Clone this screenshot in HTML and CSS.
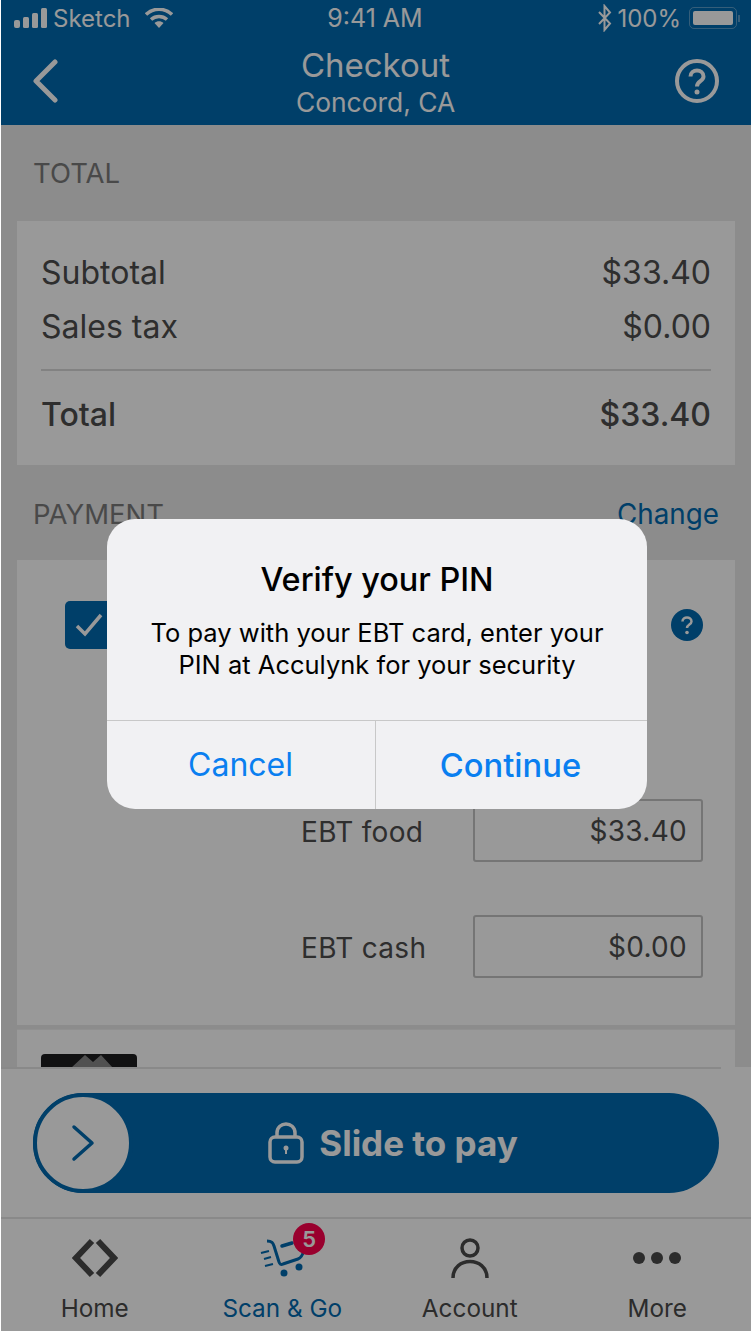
FILE: index.html
```html
<!DOCTYPE html>
<html>
  <head>
    <meta charset="utf-8">
    <title>Checkout</title>
    <link rel="stylesheet" href="styles.css">
  </head>
  <body>
    <div class="phone">
      <header class="top">
        <div class="status">
          <div class="status-left">
            <svg class="signal" width="33" height="20" viewBox="0 0 33 20"><rect x="0" y="12" width="6" height="8" rx="2"/><rect x="9" y="9" width="6" height="11" rx="1.5"/><rect x="18" y="5" width="6" height="15" rx="1.5"/><rect x="27" y="0" width="6" height="20" rx="1.5"/></svg>
            <span>Sketch</span>
            <svg class="wifi" width="28" height="20" viewBox="0 0 28 20"><path d="M1 6.500C8.500 -0.500 19.500 -0.500 27 6.500" fill="none" stroke="#fff" stroke-width="3.500"/><path d="M6 11.500C10.500 7.500 17.500 7.500 22 11.500" fill="none" stroke="#fff" stroke-width="3.500"/><path d="M9.500 15L14 20L18.500 15C16 12.800 12 12.800 9.500 15Z" fill="#fff"/></svg>
          </div>
          <div class="status-time">9:41 AM</div>
          <div class="status-right">
            <svg width="15" height="28" viewBox="0 0 15 28"><path d="M2 8L13 19.500L7.500 26V2L13 8.500L2 20" fill="none" stroke="#fff" stroke-width="2"/></svg>
            <span>100%</span>
            <span class="battery"><i></i></span>
            <span class="battery-tip"></span>
          </div>
        </div>
        <div class="nav">
          <svg class="back" width="26" height="44" viewBox="0 0 26 44"><path d="M23 3L4 22L23 41" fill="none" stroke="#fff" stroke-width="5" stroke-linecap="round" stroke-linejoin="round"/></svg>
          <div class="nav-title">
            <div class="nav-main">Checkout</div>
            <div class="nav-sub">Concord, CA</div>
          </div>
          <svg class="help" width="44" height="44" viewBox="0 0 44 44"><circle cx="22" cy="22" r="20" fill="none" stroke="#fff" stroke-width="4"/><path d="M15.500 17.500C15.500 9.500 28.500 9.500 28.500 17.500C28.500 22.500 22 22 22 27.500" fill="none" stroke="#fff" stroke-width="4"/><circle cx="22" cy="33" r="2.500" fill="#fff"/></svg>
        </div>
      </header>

      <main class="content">
        <div class="section-head">
          <span>TOTAL</span>
        </div>
        <section class="card totals">
          <div class="row"><span>Subtotal</span><span>$33.40</span></div>
          <div class="row"><span>Sales tax</span><span>$0.00</span></div>
          <div class="rule"></div>
          <div class="row row-total"><span>Total</span><span>$33.40</span></div>
        </section>

        <div class="section-head section-payment">
          <span>PAYMENT</span>
          <a class="change">Change</a>
        </div>
        <section class="card payment">
          <div class="pay-top">
            <span class="checkbox">
              <svg width="30" height="26" viewBox="0 0 30 26"><path d="M3 14L11 22L27 3" fill="none" stroke="#fff" stroke-width="3.500"/></svg>
            </span>
            <svg class="info" width="32" height="32" viewBox="0 0 32 32"><circle cx="16" cy="16" r="16" fill="#0069af"/><path d="M11.500 12.500C11.500 7 20.500 7 20.500 12.500C20.500 15.500 16 15.500 16 19" fill="none" stroke="#fff" stroke-width="2.500"/><circle cx="16" cy="23.500" r="1.800" fill="#fff"/></svg>
          </div>
          <div class="ebt-row ebt-food">
            <span class="ebt-label">EBT food</span>
            <span class="ebt-input">$33.40</span>
          </div>
          <div class="ebt-row ebt-cash">
            <span class="ebt-label">EBT cash</span>
            <span class="ebt-input">$0.00</span>
          </div>
        </section>
        <section class="card other-card">
          <div class="card-logo">
            <svg width="96" height="14" viewBox="0 0 96 14"><path d="M30 14L44 1L52 8L60 1L72 14Z" fill="#888"/></svg>
          </div>
        </section>
      </main>

      <footer class="bottom">
        <div class="bottom-rule"></div>
        <div class="slider">
          <div class="slider-knob">
            <svg width="24" height="38" viewBox="0 0 24 38"><path d="M3 3L21 19L3 35" fill="none" stroke="#0069af" stroke-width="3.500" stroke-linecap="round" stroke-linejoin="round"/></svg>
          </div>
          <div class="slider-label">
            <svg width="36" height="42" viewBox="0 0 36 42"><rect x="2" y="15" width="32" height="25" rx="5" fill="none" stroke="#fff" stroke-width="3.500"/><path d="M9 15V11C9 -1 27 -1 27 11V15" fill="none" stroke="#fff" stroke-width="3.500"/><circle cx="18" cy="26" r="2.500" fill="#fff"/><rect x="17" y="27" width="2" height="5" fill="#fff"/></svg>
            <span>Slide to pay</span>
          </div>
        </div>
        <nav class="tabs">
          <div class="tab">
            <svg width="46" height="40" viewBox="0 0 46 40"><path d="M20 3L4 20L20 37" fill="none" stroke="#4a4a4a" stroke-width="6"/><path d="M26 3L42 20L26 37" fill="none" stroke="#4a4a4a" stroke-width="6"/></svg>
            <span>Home</span>
          </div>
          <div class="tab tab-active">
            <span class="tab-icon">
              <svg width="48" height="42" viewBox="0 0 48 42"><path d="M9 3C14 3 15 5 16 8L21 24C21.500 26 23 27 25 26L40 21C43 20 45 16 46 12" fill="none" stroke="#0069af" stroke-width="3"/><path d="M24 8L34 5" fill="none" stroke="#0069af" stroke-width="3.500" stroke-linecap="round"/><path d="M3 15L11 13M6 21L13 19M7 28L15 26" fill="none" stroke="#0069af" stroke-width="2"/><circle cx="26" cy="35" r="3.500" fill="#0069af"/><circle cx="41" cy="29" r="3.500" fill="#0069af"/></svg>
              <b class="badge">5</b>
            </span>
            <span>Scan &amp; Go</span>
          </div>
          <div class="tab">
            <svg width="40" height="40" viewBox="0 0 40 40"><circle cx="20" cy="10" r="8" fill="none" stroke="#4a4a4a" stroke-width="3.500"/><path d="M3 40C3 18 37 18 37 40" fill="none" stroke="#4a4a4a" stroke-width="3.500"/></svg>
            <span>Account</span>
          </div>
          <div class="tab">
            <svg width="48" height="40" viewBox="0 0 48 40"><circle cx="6" cy="20" r="6" fill="#4a4a4a"/><circle cx="24" cy="20" r="6" fill="#4a4a4a"/><circle cx="42" cy="20" r="6" fill="#4a4a4a"/></svg>
            <span>More</span>
          </div>
        </nav>
      </footer>

      <div class="scrim">
        <div class="alert">
          <div class="alert-body">
            <div class="alert-title">Verify your PIN</div>
            <div class="alert-text">To pay with your EBT card, enter your<br>PIN at Acculynk for your security</div>
          </div>
          <div class="alert-actions">
            <div class="alert-btn">Cancel</div>
            <div class="alert-btn alert-btn-strong">Continue</div>
          </div>
        </div>
      </div>
    </div>
  </body>
</html>
```

FILE: styles.css
```css
html, body {
  margin: 0;
  background: #fff;
}

body {
  padding-left: 1px;
  font-family: Inter, "Liberation Sans", sans-serif;
  color: #4d4d4d;
}

.phone {
  position: relative;
  display: flex;
  flex-direction: column;
  width: 750px;
  height: 1331px;
  overflow: hidden;
  background: #e9e9e9;
}

/* header */
.top {
  flex: none;
  height: 125px;
  background: #0069af;
  color: #fff;
}

.status {
  display: flex;
  justify-content: space-between;
  align-items: center;
  height: 36px;
  font-size: 24px;
}

.status-left {
  display: flex;
  align-items: center;
  gap: 6px;
  padding-left: 13px;
}

.signal {
  fill: #fff;
}

.wifi {
  margin-left: 8px;
}

.status-time {
  flex: 1;
  padding-right: 20px;
  font-size: 25px;
  text-align: center;
}

.status-right {
  display: flex;
  align-items: center;
  gap: 5px;
  padding-right: 11px;
}

.battery {
  display: block;
  box-sizing: border-box;
  width: 48px;
  height: 22px;
  margin-left: 3px;
  padding: 3px;
  border: 1px solid rgba(255, 255, 255, 0.35);
  border-radius: 5px;
}

.battery i {
  display: block;
  height: 100%;
  background: #fff;
  border-radius: 2px;
}

.battery-tip {
  display: block;
  width: 2px;
  height: 7px;
  margin-left: -4px;
  background: rgba(255, 255, 255, 0.35);
}

.nav {
  display: grid;
  grid-template-columns: 1fr auto 1fr;
  align-items: center;
  height: 89px;
  padding: 0 32px 0 31px;
}

.help {
  justify-self: end;
}

.nav-title {
  margin-top: 6px;
  text-align: center;
}

.nav-main {
  font-size: 33px;
  line-height: 37px;
}

.nav-sub {
  font-size: 26.4px;
  line-height: 36px;
}

/* scrolling part */
.content {
  flex: 1;
  min-height: 0;
  overflow: hidden;
}

.section-head {
  display: flex;
  justify-content: space-between;
  align-items: center;
  height: 96px;
  padding: 0 32px;
  font-size: 27.5px;
  color: #7b7b7b;
}

.section-payment {
  box-sizing: border-box;
  height: 95px;
  padding-top: 3px;
}

.change {
  color: #0069af;
  font-size: 27.8px;
}

.card {
  box-sizing: border-box;
  width: 718px;
  margin-left: 16px;
  background: #fff;
}

.totals {
  height: 244px;
  padding: 24px 24px 0;
  font-size: 32px;
}

.row {
  display: flex;
  justify-content: space-between;
  align-items: center;
  height: 54px;
}

.rule {
  height: 2px;
  margin: 16px 0;
  background: #d9d9d9;
}

.row-total {
  font-weight: 500;
}

.payment {
  height: 465px;
  padding-top: 41px;
}

.pay-top {
  display: flex;
  justify-content: space-between;
  align-items: flex-start;
  height: 198px;
  padding: 0 32px 0 48px;
}

.checkbox {
  display: flex;
  justify-content: center;
  align-items: center;
  width: 48px;
  height: 48px;
  background: #0069af;
  border-radius: 5px;
}

.info {
  margin-top: 8px;
}

.ebt-row {
  display: flex;
  align-items: center;
  height: 63px;
  padding-left: 284px;
  font-size: 28px;
  letter-spacing: 0.3px;
}

.ebt-cash {
  margin-top: 53px;
}

.ebt-label {
  width: 172px;
  padding-top: 2px;
}

.ebt-input {
  box-sizing: border-box;
  width: 230px;
  height: 63px;
  padding-right: 14px;
  border: 2px solid #c3c3c3;
  border-radius: 3px;
  line-height: 61px;
  text-align: right;
}

.other-card {
  height: 60px;
  margin-top: 4px;
  padding: 24px 0 0 24px;
  border-top: 1px solid #f0f0f0;
}

.card-logo {
  display: flex;
  width: 96px;
  height: 40px;
  background: #1d1d1f;
  border-radius: 4px 4px 0 0;
}

/* footer */
.bottom {
  flex: none;
  height: 264px;
  background: #fff;
}

.bottom-rule {
  width: 720px;
  height: 2px;
  background: #e5e5e5;
}

.slider {
  display: flex;
  align-items: center;
  width: 686px;
  height: 100px;
  margin: 24px 0 0 32px;
  background: #0069af;
  border-radius: 50px;
}

.slider-knob {
  flex: none;
  display: flex;
  justify-content: center;
  align-items: center;
  box-sizing: border-box;
  width: 100px;
  height: 100px;
  padding-right: 1px;
  background: #fff;
  border: 4px solid #0069af;
  border-radius: 50%;
}

.slider-label {
  flex: 1;
  display: flex;
  justify-content: center;
  align-items: center;
  gap: 15px;
  padding-right: 66px;
  color: #fff;
  font-size: 35px;
  font-weight: 700;
}

.tabs {
  box-sizing: border-box;
  display: flex;
  height: 114px;
  margin-top: 24px;
  padding-top: 19px;
  border-top: 2px solid #e5e5e5;
}

.tab {
  display: flex;
  flex-direction: column;
  align-items: center;
  justify-content: space-between;
  width: 188px;
  height: 85px;
  font-size: 24.3px;
  color: #4a4a4a;
}

.tab-active {
  color: #0069af;
}

/* badge sits over the cart */
.tab-icon {
  position: relative;
  display: block;
  height: 42px;
}

.badge {
  position: absolute;
  top: -15px;
  right: -19px;
  width: 32px;
  height: 32px;
  background: #ff004d;
  border-radius: 50%;
  color: #fff;
  font-size: 22px;
  font-weight: 600;
  line-height: 32px;
  text-align: center;
}

/* dimmed layer with the dialog */
.scrim {
  position: absolute;
  inset: 0;
  padding: 519px 0 0 106px;
  background: rgba(0, 0, 0, 0.4);
}

.alert {
  width: 540px;
  height: 290px;
  background: #f1f1f3;
  border-radius: 28px;
  color: #000;
  text-align: center;
}

.alert-body {
  box-sizing: border-box;
  height: 202px;
  padding-top: 40px;
  border-bottom: 1px solid #c8c8c8;
}

.alert-title {
  font-size: 32.4px;
  font-weight: 500;
  line-height: 42px;
}

.alert-text {
  margin-top: 16px;
  font-size: 25.5px;
  line-height: 32px;
}

.alert-actions {
  display: flex;
  height: 88px;
}

.alert-btn {
  flex: 1;
  margin-left: -1px;
  color: #0a7ff0;
  font-size: 32px;
  line-height: 88px;
}

.alert-btn-strong {
  margin-left: 0;
  padding-right: 2px;
  border-left: 1px solid #c8c8c8;
  font-size: 32.7px;
  font-weight: 500;
}
```
